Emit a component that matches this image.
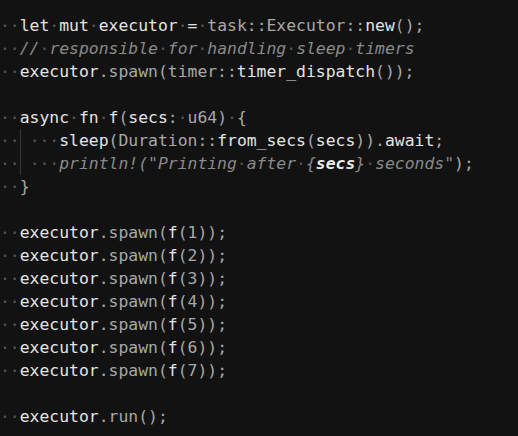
import React from 'react';

type Kind = 'b' | 'g' | 'c' | 'bi' | 'ws' | 'guide';
type Tok = [Kind, string];

const colors: Record<string, string> = {
  b: 'text-[#e4e4e4]',
  g: 'text-[#a8a8a8]',
  c: 'text-[#8a8a8a] italic',
  bi: 'text-[#ececec] italic font-bold',
};

// spaces are drawn as faint middle dots, like "render whitespace" in the editor
const Text = ({ kind, text }: { kind: Kind; text: string }) => {
  if (kind === 'ws') {
    return <span className="text-[#575757]">{'\u00b7'.repeat(text.length)}</span>;
  }
  if (kind === 'guide') {
    return (
      <span className="inline-block h-[23px] align-top shadow-[inset_1px_0_0_#383838]">{'\u00a0'}</span>
    );
  }
  const parts = text.split(/( +)/);
  return (
    <>
      {parts.map((p, i) =>
        p.startsWith(' ') ? (
          <span key={i} className="text-[#575757]">
            {'\u00b7'.repeat(p.length)}
          </span>
        ) : (
          <span key={i} className={colors[kind]}>
            {p}
          </span>
        )
      )}
    </>
  );
};

const spawnLine = (n: number): Tok[] => [
  ['ws', '  '],
  ['b', 'executor'],
  ['g', '.spawn('],
  ['b', 'f'],
  ['g', `(${n}));`],
];

const lines: Tok[][] = [
  [
    ['ws', '  '],
    ['b', 'let mut executor = '],
    ['g', 'task::Executor::'],
    ['b', 'new'],
    ['g', '();'],
  ],
  [
    ['ws', '  '],
    ['c', '// responsible for handling sleep timers'],
  ],
  [
    ['ws', '  '],
    ['b', 'executor'],
    ['g', '.spawn(timer::'],
    ['b', 'timer_dispatch'],
    ['g', '());'],
  ],
  [],
  [
    ['ws', '  '],
    ['b', 'async fn f'],
    ['g', '('],
    ['b', 'secs'],
    ['g', ': u64) {'],
  ],
  [
    ['ws', '  '],
    ['guide', ' '],
    ['ws', '   '],
    ['b', 'sleep'],
    ['g', '(Duration::'],
    ['b', 'from_secs'],
    ['g', '('],
    ['b', 'secs'],
    ['g', ')).'],
    ['b', 'await'],
    ['g', ';'],
  ],
  [
    ['ws', '  '],
    ['guide', ' '],
    ['ws', '   '],
    ['c', 'println!("Printing after {'],
    ['bi', 'secs'],
    ['c', '} seconds"'],
    ['g', ');'],
  ],
  [
    ['ws', '  '],
    ['g', '}'],
  ],
  [],
  spawnLine(1),
  spawnLine(2),
  spawnLine(3),
  spawnLine(4),
  spawnLine(5),
  spawnLine(6),
  spawnLine(7),
  [],
  [
    ['ws', '  '],
    ['b', 'executor'],
    ['g', '.run();'],
  ],
];

export default function App() {
  return (
    <div className="w-[518px] h-[436px] overflow-hidden bg-[#121212] pt-[14px] font-['DejaVu_Sans_Mono',monospace] text-[16.4px] leading-[23px]">
      {lines.map((line, i) => (
        <div key={i} className="h-[23px] whitespace-pre">
          {line.map(([kind, text], j) => (
            <Text key={j} kind={kind} text={text} />
          ))}
        </div>
      ))}
    </div>
  );
}
